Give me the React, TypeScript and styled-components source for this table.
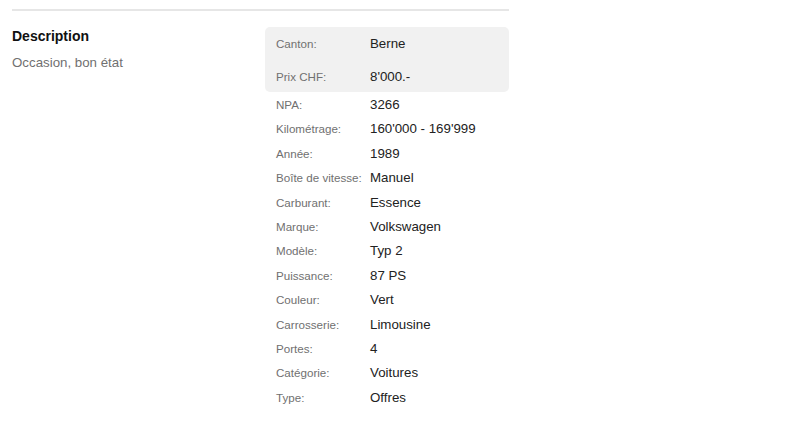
import React from 'react'
import styled, { createGlobalStyle } from 'styled-components'

const GlobalStyle = createGlobalStyle`
  body {
    margin: 0;
    background: #fff;
    font-family: "Liberation Sans", Arial, sans-serif;
  }
`

const Page = styled.div`
  width: 497px;
  padding: 9px 12px 0 12px;
`

const Divider = styled.hr`
  border: none;
  border-top: 2px solid #e6e6e6;
  margin: 0 0 16px 0;
`

const Columns = styled.div`
  display: grid;
  grid-template-columns: 253px 1fr;
`

const Heading = styled.h3`
  margin: -1px 0 0 0;
  font-size: 14px;
  font-weight: bold;
  color: #111;
  line-height: 20px;
`

const Text = styled.p`
  margin: 7px 0 0 0;
  font-size: 13.3px;
  color: #707070;
  line-height: 20px;
`

const Highlight = styled.div`
  background: #f1f1f1;
  border-radius: 5px;
`

const Row = styled.div<{ $tall?: boolean }>`
  box-sizing: border-box;
  display: flex;
  align-items: baseline;
  padding: 1px 11px 0 11px;
  height: ${p => (p.$tall ? '32.5px' : '24.4px')};
  line-height: ${p => (p.$tall ? '32.5px' : '24.4px')};
`

const Label = styled.span`
  width: 94px;
  flex: none;
  font-size: 11.6px;
  color: #707070;
  white-space: nowrap;
`

const Value = styled.span`
  font-size: 13.3px;
  color: #222;
`

const top = [
  ['Canton:', 'Berne'],
  ['Prix CHF:', "8'000.-"],
]

const rest = [
  ['NPA:', '3266'],
  ['Kilométrage:', "160'000 - 169'999"],
  ['Année:', '1989'],
  ['Boîte de vitesse:', 'Manuel'],
  ['Carburant:', 'Essence'],
  ['Marque:', 'Volkswagen'],
  ['Modèle:', 'Typ 2'],
  ['Puissance:', '87 PS'],
  ['Couleur:', 'Vert'],
  ['Carrosserie:', 'Limousine'],
  ['Portes:', '4'],
  ['Catégorie:', 'Voitures'],
  ['Type:', 'Offres'],
]

export default function App() {
  return (
    <>
      <GlobalStyle />
      <Page>
        <Divider />
        <Columns>
          <div>
            <Heading>Description</Heading>
            <Text>Occasion, bon état</Text>
          </div>
          <div>
            <Highlight>
              {top.map(([l, v]) => (
                <Row $tall key={l}>
                  <Label>{l}</Label>
                  <Value>{v}</Value>
                </Row>
              ))}
            </Highlight>
            {rest.map(([l, v]) => (
              <Row key={l}>
                <Label>{l}</Label>
                <Value>{v}</Value>
              </Row>
            ))}
          </div>
        </Columns>
      </Page>
    </>
  )
}
